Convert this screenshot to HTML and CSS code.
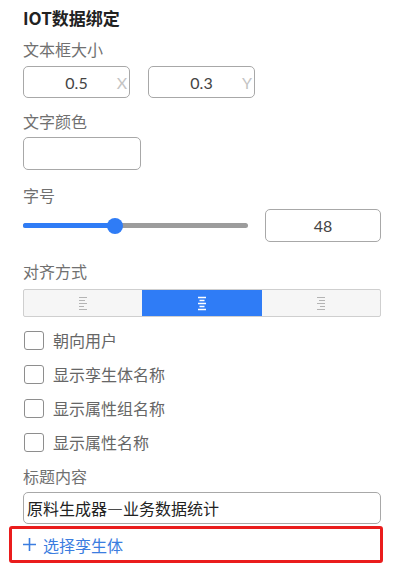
FILE: index.html
```html
<!DOCTYPE html>
<html lang="zh">
<head>
<meta charset="utf-8">
<link rel="stylesheet" href="styles.css">
</head>
<body>
<div class="panel">
  <h1 class="title">IOT数据绑定</h1>

  <div class="label l-size">文本框大小</div>
  <div class="pair">
    <div class="num-box"><span></span><span class="val">0.5</span><span class="suffix">X</span></div>
    <div class="num-box"><span></span><span class="val">0.3</span><span class="suffix">Y</span></div>
  </div>

  <div class="label l-color">文字颜色</div>
  <div class="color-box"></div>

  <div class="label l-font">字号</div>
  <div class="slider-row">
    <div class="slider">
      <div class="track"><div class="fill" style="width:92px"></div></div>
      <div class="thumb" style="left:92px"></div>
    </div>
    <div class="font-input">48</div>
  </div>

  <div class="label l-align">对齐方式</div>
  <div class="segmented">
    <div class="seg">
      <svg width="10" height="15" viewBox="0 0 10 15"><g stroke="#b4b4b4" stroke-width="1.2"><path d="M1 1.5h8M1 4.5h6M1 7.5h8M1 10.5h5M1 13.5h8"/></g></svg>
    </div>
    <div class="seg active">
      <svg width="10" height="15" viewBox="0 0 10 15"><g stroke="#ffffff" stroke-width="1.3"><path d="M1 1.5h8M2.5 4.5h5M1 7.5h8M2.5 10.5h5M1 13.5h8"/></g></svg>
    </div>
    <div class="seg">
      <svg width="10" height="15" viewBox="0 0 10 15"><g stroke="#b4b4b4" stroke-width="1.2"><path d="M1 1.5h8M3 4.5h6M1 7.5h8M4 10.5h5M1 13.5h8"/></g></svg>
    </div>
  </div>

  <div class="checks">
    <label class="check"><span class="box"></span>朝向用户</label>
    <label class="check"><span class="box"></span>显示孪生体名称</label>
    <label class="check"><span class="box"></span>显示属性组名称</label>
    <label class="check"><span class="box"></span>显示属性名称</label>
  </div>

  <div class="label l-title">标题内容</div>
  <div class="text-input">原料生成器—业务数据统计</div>

  <div class="add-twin">
    <svg class="plus" width="13" height="13" viewBox="0 0 13 13"><path d="M6.5 0v13M0 6.5h13" stroke="#3b7de0" stroke-width="1.6"/></svg>
    <span>选择孪生体</span>
  </div>
</div>
</body>
</html>
```

FILE: styles.css
```css
* { box-sizing: border-box; }
html, body { margin: 0; padding: 0; background: #fff; }
body {
  font-family: "Noto Sans CJK SC", "Noto Sans", sans-serif;
  font-size: 16px;
  color: #666;
}
.panel {
  width: 381px;
  padding: 6px 0 0 23px;
}
.title {
  margin: 0;
  font-size: 17px;
  line-height: 24px;
  font-weight: 700;
  color: #222;
}
.label {
  font-size: 16px;
  line-height: 22px;
  color: #707070;
}
.l-size { margin-top: 8px; }
.l-color { margin-top: 12px; }
.l-font { margin-top: 14px; }
.l-align { margin-top: 18px; }
.l-title { margin-top: 6px; }

.pair {
  display: flex;
  gap: 18px;
  margin-top: 6px;
}
.num-box {
  width: 107px;
  height: 32px;
  border: 1px solid #a8a8a8;
  border-radius: 5px;
  display: grid;
  grid-template-columns: 14px 1fr 14px;
  align-items: center;
  font-family: "Lato", "Noto Sans", sans-serif;
}
.num-box .val { text-align: center; color: #444; font-size: 16px; }
.num-box .suffix { text-align: center; color: #c4c4c4; font-size: 16px; }

.color-box {
  margin-top: 5px;
  width: 118px;
  height: 33px;
  border: 1px solid #a8a8a8;
  border-radius: 5px;
}

.slider-row {
  margin-top: 3px;
  height: 33px;
  display: flex;
  align-items: center;
  gap: 17px;
}
.slider {
  position: relative;
  width: 225px;
  height: 16px;
  display: flex;
  align-items: center;
}
.track {
  width: 100%;
  height: 5px;
  border-radius: 3px;
  background: #9c9c9c;
  overflow: hidden;
}
.fill { height: 100%; background: #2f7cf6; }
.thumb {
  position: absolute;
  top: 0;
  width: 16px;
  height: 16px;
  margin-left: -8px;
  border-radius: 50%;
  background: #2f7cf6;
}
.font-input {
  width: 116px;
  height: 33px;
  border: 1px solid #a8a8a8;
  border-radius: 5px;
  display: flex;
  align-items: center;
  justify-content: center;
  font-family: "Lato", "Noto Sans", sans-serif;
  color: #444;
}

.segmented {
  margin-top: 7px;
  width: 358px;
  height: 28px;
  border: 1px solid #cfcfcf;
  border-radius: 2px;
  display: grid;
  grid-template-columns: 118px 120px 1fr;
  background: #f6f6f6;
}
.seg {
  display: flex;
  align-items: center;
  justify-content: center;
}
.seg + .seg { border-left: 1px solid #e0e0e0; }
.seg.active { background: #2f7cf6; border-left: none; }
.seg.active + .seg { border-left: none; }

.checks { margin-top: 6px; }
.check {
  height: 34px;
  display: flex;
  align-items: center;
  gap: 9px;
  color: #666;
  font-size: 16px;
}
.check .box {
  width: 20px;
  height: 19px;
  border: 1.5px solid #8e8e8e;
  border-radius: 3px;
  margin-left: 1px;
}

.text-input {
  margin-top: 5px;
  width: 358px;
  height: 32px;
  border: 1px solid #a8a8a8;
  border-radius: 5px;
  padding-left: 3px;
  display: flex;
  align-items: center;
  color: #222;
  font-size: 16px;
}

.add-twin {
  margin-top: 2px;
  margin-left: -14px;
  width: 374px;
  height: 37px;
  border: 3px solid #ea1c1c;
  border-radius: 3px;
  display: flex;
  align-items: center;
  padding-left: 11px;
  gap: 7px;
  color: #3b7de0;
  font-size: 16px;
}
.plus { flex: none; }
```
